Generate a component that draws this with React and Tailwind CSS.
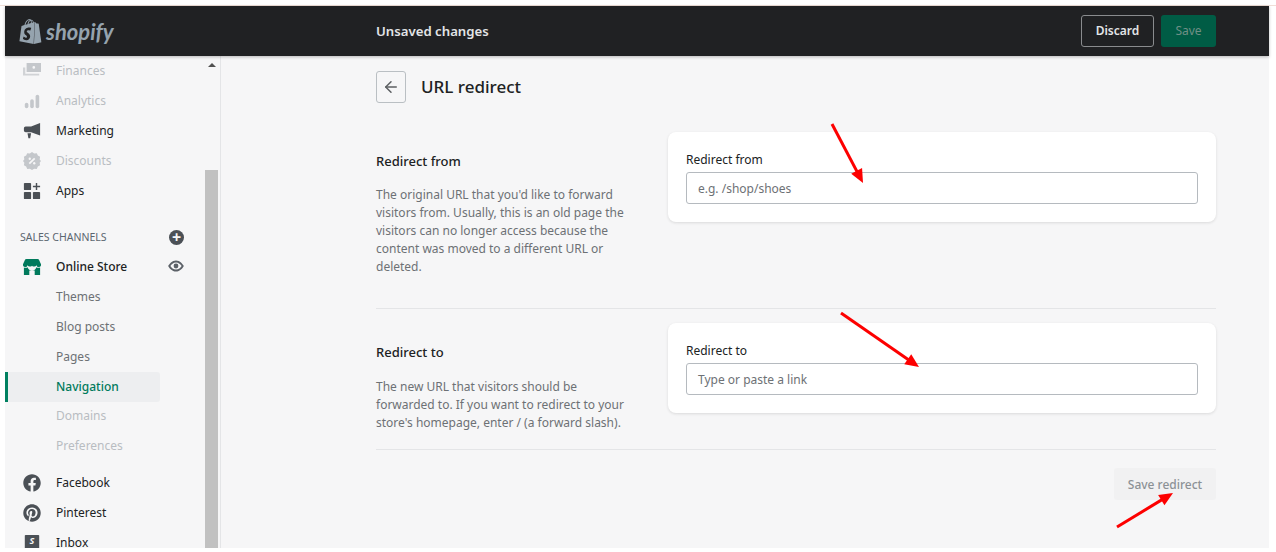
import React from 'react';
import { ArrowLeft } from 'lucide-react';
import { FaFacebook, FaPinterest } from 'react-icons/fa';
import { SiShopify } from 'react-icons/si';

const FONT = 'font-["Noto_Sans",sans-serif]';

function FinancesIcon() {
  return (
    <svg viewBox="0 0 20 20" className="w-[18px] h-[18px] fill-current">
      <path d="M4 1h16v10H4zM10.500 6a1.500 1.500 0 1 0 3 0 1.500 1.500 0 0 0-3 0z" fillRule="evenodd" />
      <path d="M0 6h2.500v7H18v2H0z" opacity=".75" />
    </svg>
  );
}

function AnalyticsIcon() {
  return (
    <svg viewBox="0 0 20 20" className="w-[18px] h-[18px] fill-current">
      <rect x="2" y="12" width="4" height="6" rx="2" />
      <rect x="8" y="8" width="4" height="10" rx="2" />
      <rect x="14" y="3" width="4" height="15" rx="2" />
    </svg>
  );
}

function MarketingIcon() {
  return (
    <svg viewBox="0 0 20 20" className="w-[18px] h-[18px] fill-current">
      <path d="M19 1v14L9 11.500H3a2 2 0 0 1-2-2V7a2 2 0 0 1 2-2h6zM5 12.500h4L8 18H6z" />
    </svg>
  );
}

function DiscountIcon() {
  return (
    <svg viewBox="0 0 20 20" className="w-[18px] h-[18px]">
      <path className="fill-current" d="M10 0l2.400 1.600 2.900-.3 1.200 2.600 2.500 1.400-.5 2.900L20 10l-1.500 1.900.5 2.900-2.500 1.400-1.200 2.600-2.900-.3L10 20l-2.400-1.500-2.900.3-1.200-2.600L1 14.800l.5-2.900L0 10l1.500-1.900L1 5.200l2.500-1.300 1.200-2.600 2.900.3z" />
      <path d="M7 13l6-6" className="stroke-[#f6f6f7]" strokeWidth="2" />
      <circle cx="7.500" cy="7.500" r="1.300" className="fill-[#f6f6f7]" />
      <circle cx="12.500" cy="12.500" r="1.300" className="fill-[#f6f6f7]" />
    </svg>
  );
}

function AppsIcon() {
  return (
    <svg viewBox="0 0 20 20" className="w-[18px] h-[18px] fill-current">
      <rect x="1" y="1" width="8" height="8" rx="1" />
      <rect x="1" y="11" width="8" height="8" rx="1" />
      <rect x="11" y="11" width="8" height="8" rx="1" />
      <path d="M14.200 1h1.600v3.200H19v1.600h-3.200V9h-1.600V5.800H11V4.200h3.200z" />
    </svg>
  );
}

function StoreIcon() {
  return (
    <svg viewBox="0 0 20 20" className="w-[18px] h-[18px] fill-current">
      <path d="M4 1h12a2 2 0 0 1 2 1.500l2 4.500a2.500 2.500 0 0 1-5 1 3.200 3.200 0 0 1-5 .500 3.200 3.200 0 0 1-5-.500 2.500 2.500 0 0 1-5-1l2-4.500A2 2 0 0 1 4 1z" />
      <path d="M1 10.500c1.500.7 3 .6 4.200-.2a5 5 0 0 0 9.600 0c1.200.8 2.700.9 4.200.2V19h-6v-5H7v5H1z" />
    </svg>
  );
}

function InboxIcon() {
  return (
    <svg viewBox="0 0 20 20" className="w-[18px] h-[18px] fill-current">
      <path d="M3 1h14a1 1 0 0 1 1 1v16a1 1 0 0 1-1 1H3a1 1 0 0 1-1-1V2a1 1 0 0 1 1-1z" />
      <text x="10" y="11" textAnchor="middle" className="fill-[#f6f6f7] text-[10px] font-bold italic">S</text>
    </svg>
  );
}

function EyeIcon() {
  return (
    <svg viewBox="0 0 20 20" className="absolute right-[16px] top-[6px] w-[16px] h-[16px] fill-[#5c6168]">
      <path fillRule="evenodd" d="M10 3c5 0 8.500 4.500 9.800 7-1.300 2.500-4.800 7-9.800 7S1.500 12.500.2 10C1.500 7.500 5 3 10 3zm0 2.500C6.800 5.500 4.200 8 3 10c1.200 2 3.800 4.500 7 4.500s5.800-2.500 7-4.500c-1.200-2-3.800-4.500-7-4.500z" />
      <circle cx="10" cy="10" r="3" />
    </svg>
  );
}

function NavItem({ icon, label, muted }) {
  return (
    <div className="flex items-center h-[30px] pl-[18px]">
      <span className={`w-[33px] flex justify-start ${muted ? 'text-[#c4c7cb]' : 'text-[#4b5056]'}`}>{icon}</span>
      <span className={`text-[12px] ${muted ? 'text-[#b9bdc2]' : 'text-[#202223]'}`}>{label}</span>
    </div>
  );
}

function SubItem({ label, muted, active }) {
  if (active) {
    return (
      <div className="relative flex items-center h-[30px] ml-[2px] mr-[45px] pl-[49px] rounded-[3px] bg-[#edeef0] text-[12px] font-medium text-[#007a5c]">
        <span className="absolute left-[-2px] top-0 bottom-0 w-[3px] bg-[#008060]" />
        {label}
      </div>
    );
  }
  return (
    <div className={`flex items-center h-[30px] pl-[51px] text-[12px] ${muted ? 'text-[#b9bdc2]' : 'text-[#6d7175]'}`}>
      {label}
    </div>
  );
}

function Sidebar() {
  return (
    <aside className="w-[216px] shrink-0 flex border-r border-[#e4e5e7] overflow-hidden">
      <nav className="w-[200px] shrink-0">
        <NavItem muted icon={<FinancesIcon />} label="Finances" />
        <NavItem muted icon={<AnalyticsIcon />} label="Analytics" />
        <NavItem icon={<MarketingIcon />} label="Marketing" />
        <NavItem muted icon={<DiscountIcon />} label="Discounts" />
        <NavItem icon={<AppsIcon />} label="Apps" />

        <div className="flex items-center justify-between h-[30px] mt-[16px] pl-[15px] pr-[21px]">
          <span className="pt-[2px] text-[10.500px] text-[#5c6670]">SALES CHANNELS</span>
          <span className="w-[15px] h-[15px] rounded-full bg-[#4b5056] text-[#f6f6f7] flex items-center justify-center text-[16px] font-bold leading-none">+</span>
        </div>

        <div className="relative flex items-center h-[30px] pl-[18px] pr-[21px]">
          <span className="w-[33px] text-[#007a5c]"><StoreIcon /></span>
          <span className="text-[12px] font-medium text-[#202223]">Online Store</span>
          <span className="absolute right-[5px] top-0"><EyeIcon /></span>
        </div>
        <SubItem label="Themes" />
        <SubItem label="Blog posts" />
        <SubItem label="Pages" />
        <SubItem label="Navigation" active />
        <div className="-mt-[1px]">
          <SubItem label="Domains" muted />
          <SubItem label="Preferences" muted />
        </div>

        <div className="mt-[7px]">
          <NavItem icon={<FaFacebook className="w-[18px] h-[18px]" />} label="Facebook" />
          <NavItem icon={<FaPinterest className="w-[18px] h-[18px]" />} label="Pinterest" />
          <NavItem icon={<InboxIcon />} label="Inbox" />
        </div>
      </nav>

      {/* scrollbar */}
      <div className="w-[13px] flex flex-col">
        <div className="h-[114px] flex justify-center pt-[7px]">
          <span className="w-0 h-0 border-x-[4px] border-x-transparent border-b-[4px] border-b-[#505050]" />
        </div>
        <div className="flex-1 bg-[#c1c1c1]" />
      </div>
    </aside>
  );
}

function Section({ title, lines, label, placeholder, className, textClass }) {
  return (
    <section className={`flex ${className}`}>
      <div className="w-[292px] shrink-0">
        <h2 className="text-[13px] font-medium leading-[18px] text-[#202223] mt-[20px]">{title}</h2>
        <p className={`${textClass} text-[12px] leading-[18px] text-[#6d7175]`}>
          {lines.map((l) => (
            <span key={l} className="block whitespace-nowrap">{l}</span>
          ))}
        </p>
      </div>
      <div className="w-[548px] h-[90px] bg-white rounded-[8px] shadow-[0_1px_3px_rgba(23,24,24,0.12)] px-[18px] pt-[19px]">
        <label className="block text-[12px] leading-[18px] text-[#202223]">{label}</label>
        <div className="mt-[3px] h-[32px] flex items-center px-[11px] pt-[2px] rounded-[3px] border border-[#b5babf] bg-white text-[12px] text-[#6d7175]">
          {placeholder}
        </div>
      </div>
    </section>
  );
}

// red annotation arrow, coords are page pixels
function Arrow({ x1, y1, x2, y2 }) {
  const a = Math.atan2(y2 - y1, x2 - x1);
  const len = 15;
  const w = 0.42;
  const p1 = [x2 - len * Math.cos(a - w), y2 - len * Math.sin(a - w)];
  const p2 = [x2 - len * Math.cos(a + w), y2 - len * Math.sin(a + w)];
  return (
    <g>
      <line x1={x1} y1={y1} x2={x2 - 8 * Math.cos(a)} y2={y2 - 8 * Math.sin(a)} stroke="#fd0000" strokeWidth="3" />
      <polygon points={`${x2},${y2} ${p1[0]},${p1[1]} ${p2[0]},${p2[1]}`} fill="#fd0000" />
    </g>
  );
}

export default function App() {
  return (
    <div className={`relative w-[1276px] h-[552px] bg-white overflow-hidden ${FONT}`}>
      <div className="h-[6px] border-b border-[#f0dfd8]" />
      <div className="ml-[5px] mr-[7px] h-[542px] flex flex-col bg-[#f6f6f7]">
        <header className="h-[50px] shrink-0 flex items-center bg-[#202123] shadow-[0_1px_3px_rgba(0,0,0,0.25)] z-10">
          <div className="w-[371px] shrink-0 flex items-center pl-[13px] text-[#95a3ae]">
            <SiShopify className="w-[25px] h-[29px]" />
            <span className="ml-[3px] pt-[2px] text-[22px] font-bold italic font-['Lato',sans-serif] leading-none">shopify</span>
          </div>
          <span className="pt-[2px] text-[13.200px] font-semibold text-[#e3e5e7]">Unsaved changes</span>
          <div className="ml-auto mr-[53px] flex gap-[7px]">
            <button className="w-[73px] h-[32px] rounded-[3px] border border-[#8a8c8e] text-[12px] font-semibold text-[#e3e5e7]">Discard</button>
            <button className="w-[55px] h-[32px] rounded-[3px] bg-[#005c45] text-[12px] text-[#6f8f85]">Save</button>
          </div>
        </header>

        <div className="flex-1 flex min-h-0">
          <Sidebar />
          <main className="flex-1 pl-[155px] pt-[15px]">
            <div className="w-[840px]">
              <div className="flex items-center gap-[15px]">
                <button className="w-[30px] h-[32px] flex items-center justify-center rounded-[3px] border border-[#babfc3] text-[#5c5f62]">
                  <ArrowLeft className="w-[18px] h-[18px]" strokeWidth={2} />
                </button>
                <h1 className="text-[17px] font-medium text-[#202223]">URL redirect</h1>
              </div>

              <Section
                className="mt-[29px] h-[177px] border-b border-[#e4e5e7]"
                textClass="mt-[16px]"
                title="Redirect from"
                label="Redirect from"
                placeholder="e.g. /shop/shoes"
                lines={[
                  "The original URL that you'd like to forward",
                  'visitors from. Usually, this is an old page the',
                  'visitors can no longer access because the',
                  'content was moved to a different URL or',
                  'deleted.',
                ]}
              />
              <Section
                className="pt-[14px] h-[141px] border-b border-[#e4e5e7]"
                textClass="mt-[17px]"
                title="Redirect to"
                label="Redirect to"
                placeholder="Type or paste a link"
                lines={[
                  'The new URL that visitors should be',
                  'forwarded to. If you want to redirect to your',
                  "store's homepage, enter / (a forward slash).",
                ]}
              />

              <div className="flex justify-end pt-[18px]">
                <button className="w-[102px] h-[32px] pt-[2px] rounded-[3px] bg-[#f1f1f2] text-[12px] font-medium text-[#8c9196]">Save redirect</button>
              </div>
            </div>
          </main>
        </div>
      </div>

      {/* annotations drawn over the screenshot */}
      <svg className="absolute inset-0 pointer-events-none" width="1276" height="552">
        <Arrow x1={832} y1={124} x2={863} y2={183} />
        <Arrow x1={841} y1={313} x2={919} y2={367} />
        <Arrow x1={1117} y1={527} x2={1173} y2={493} />
      </svg>
    </div>
  );
}
